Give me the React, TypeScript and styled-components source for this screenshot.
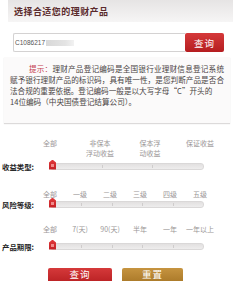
import styled, { createGlobalStyle } from "styled-components";

const GlobalStyle = createGlobalStyle`
  html, body { margin: 0; padding: 0; background: #fff; }
  body { font-family: "Liberation Serif", "Noto Sans CJK SC", serif; }
`;

interface SliderRow {
  title: string;
  labels: string[][];
  top: number; // space above the label row
  gap: number; // space between labels and track
  labelH: number;
}

const rows: SliderRow[] = [
  { title: "收益类型", labels: [["全部"], ["非保本", "浮动收益"], ["保本浮", "动收益"], ["保证收益"]], top: 16, gap: 0, labelH: 20 },
  { title: "风险等级", labels: [["全部"], ["一级"], ["二级"], ["三级"], ["四级"], ["五级"]], top: 17, gap: -2, labelH: 9 },
  { title: "产品期限", labels: [["全部"], ["7(天)"], ["90(天)"], ["半年"], ["一年"], ["一年以上"]], top: 14, gap: 5, labelH: 9 },
];

const TRACK_START = 50;
const TRACK_END = 200;

export default function App() {
  return (
    <Page>
      <GlobalStyle />
      <Header>选择合适您的理财产品</Header>
      <SearchRow>
        <Input>
          C1086217<Blur />
        </Input>
        <RedButton $w={39}>查询</RedButton>
      </SearchRow>
      <TipBox>
        <Tip>提示：</Tip>
        理财产品登记编码是全国银行业理财信息登记系统赋予银行理财产品的标识码，具有唯一性，是您判断产品是否合法合规的重要依据。登记编码一般是以大写字母“C”开头的
        <br />
        14位编码（中央国债登记结算公司）。
      </TipBox>
      {rows.map((row) => (
        <Filter key={row.title} $top={row.top}>
          <Labels $h={row.labelH}>
            {row.labels.map((l, j) => {
              const x = TRACK_START + ((TRACK_END - TRACK_START) * j) / (row.labels.length - 1);
              return (
                <Label key={j} style={{ left: x }}>
                  {l.map((t) => (
                    <div key={t}>{t}</div>
                  ))}
                </Label>
              );
            })}
          </Labels>
          <SliderLine $gap={row.gap}>
            <RowTitle>{row.title}:</RowTitle>
            <Track>
              {row.labels.slice(1, -1).map((_, j) => (
                <Tick key={j} style={{ left: `${((j + 1) * 100) / (row.labels.length - 1)}%` }} />
              ))}
              <Thumb />
            </Track>
          </SliderLine>
        </Filter>
      ))}
      <Buttons>
        <RedButton $w={64}>查询</RedButton>
        <GoldButton>重置</GoldButton>
      </Buttons>
    </Page>
  );
}

const Page = styled.div`
  width: 233px;
  height: 281px;
  overflow: hidden;
`;

const Header = styled.div`
  margin-left: 8px;
  height: 22px;
  padding-left: 6px;
  display: flex;
  align-items: center;
  background: linear-gradient(#e6e4e4, #f6f5f5);
  color: #5a2a2c;
  font-family: "Noto Sans CJK SC", sans-serif;
  font-weight: 700;
  font-size: 9px;
  letter-spacing: 0.45px;
`;

const SearchRow = styled.div`
  display: flex;
  margin: 11px 9px 0 13px;
  height: 19px;
`;

const Input = styled.div`
  flex: 1;
  display: flex;
  align-items: center;
  padding-left: 1px;
  border: 1px solid #d4d2d2;
  border-right: none;
  border-radius: 2px 0 0 2px;
  font-family: "Liberation Sans", sans-serif;
  font-size: 6.5px;
  color: #555;
  background: #fff;
`;

const Blur = styled.span`
  display: inline-block;
  width: 28px;
  height: 6px;
  margin-left: 1px;
  background: linear-gradient(90deg, #d8d8d8, #e4e4e4 70%, #f2f2f2);
`;

const RedButton = styled.div<{ $w: number }>`
  width: ${(p) => p.$w}px;
  display: flex;
  align-items: center;
  justify-content: center;
  background: linear-gradient(#d5393a, #b51d20);
  border-radius: 2px;
  color: #fff;
  font-family: "Noto Sans CJK SC", sans-serif;
  font-size: 9.5px;
  letter-spacing: 1px;
`;

const TipBox = styled.div`
  margin: 5px 3px 0 4px;
  padding: 6px 6px 16px 6px;
  background: #fbfafa;
  box-shadow: 0 1px 1px #dcdada;
  font-family: "Noto Sans CJK SC", sans-serif;
  font-size: 7.6px;
  line-height: 11px;
  color: #4a4444;
  text-align: justify;
`;

const Tip = styled.span`
  margin-left: 19px;
  color: #c4404e;
`;

const Filter = styled.div<{ $top: number }>`
  margin-top: ${(p) => p.$top}px;
`;

const Labels = styled.div<{ $h: number }>`
  position: relative;
  height: ${(p) => p.$h}px;
`;

const Label = styled.div`
  position: absolute;
  top: 0;
  transform: translateX(-50%);
  text-align: center;
  white-space: nowrap;
  font-family: "Noto Sans CJK SC", sans-serif;
  font-size: 7px;
  line-height: 9.5px;
  color: #9a9696;
`;

const SliderLine = styled.div<{ $gap: number }>`
  display: flex;
  align-items: center;
  height: 14px;
  margin-top: ${(p) => p.$gap}px;
`;

const RowTitle = styled.div`
  width: 48px;
  padding-left: 2px;
  font-family: "Noto Sans CJK SC", sans-serif;
  font-weight: 700;
  font-size: 7.4px;
  color: #222;
`;

const Track = styled.div`
  position: relative;
  width: 152px;
  height: 5px;
  border-radius: 3px;
  background: linear-gradient(#e2e0e0, #eeeded);
  border: 1px solid #dad8d8;
`;

const Tick = styled.div`
  position: absolute;
  top: 1px;
  width: 1px;
  height: 3px;
  background: #cfcccc;
`;

const Thumb = styled.div`
  position: absolute;
  left: -2px;
  top: -4px;
  width: 7px;
  height: 10px;
  background: linear-gradient(#e0393a, #c41f24);
  clip-path: polygon(50% 0, 100% 30%, 100% 100%, 0 100%, 0 30%);
  &::after {
    content: "";
    position: absolute;
    left: 2px;
    top: 4px;
    width: 3px;
    height: 3px;
    background: #f08a8a;
  }
`;

const Buttons = styled.div`
  display: flex;
  gap: 10px;
  margin: 15px 0 0 48px;
  height: 16px;
  && > * {
    height: 16px;
    align-items: flex-start;
    padding-top: 1px;
    line-height: 11px;
    border-radius: 2px 2px 0 0;
  }
`;

const GoldButton = styled.div`
  width: 61px;
  display: flex;
  align-items: center;
  justify-content: center;
  background: linear-gradient(#c69440, #a57424);
  border-radius: 2px;
  color: #fff;
  font-family: "Noto Sans CJK SC", sans-serif;
  font-size: 9.5px;
  letter-spacing: 1px;
`;
